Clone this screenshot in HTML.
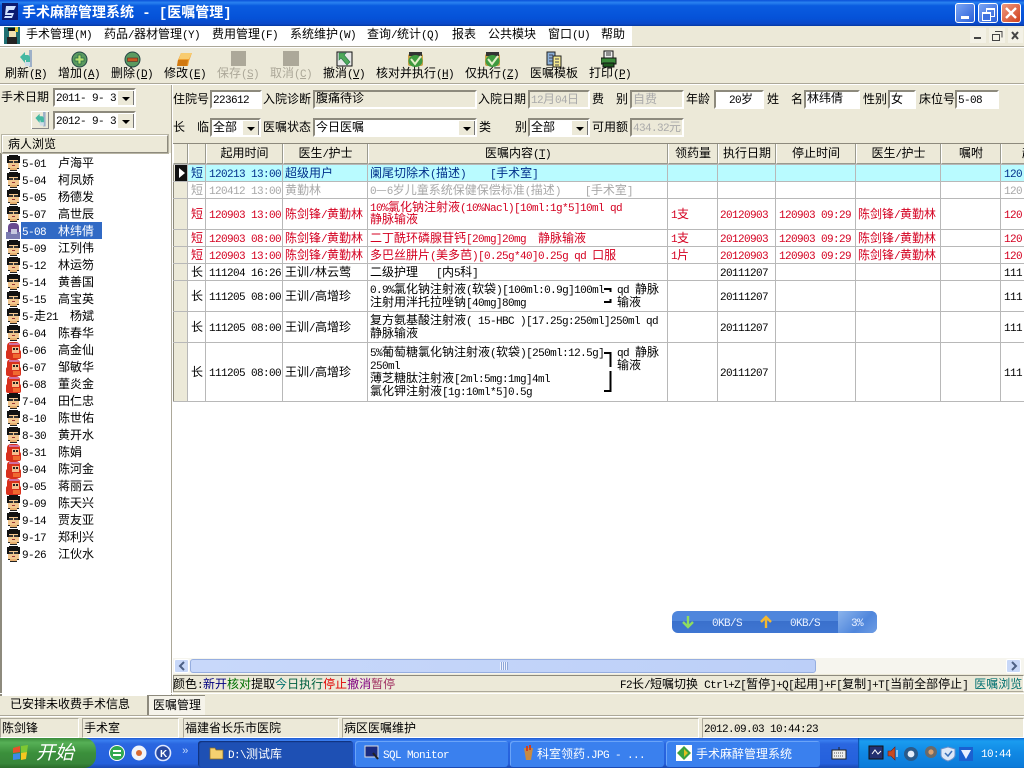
<!DOCTYPE html>
<html><head><meta charset="utf-8"><title>手术麻醉管理系统</title>
<style>
html,body{margin:0;padding:0;width:1024px;height:768px;overflow:hidden;background:#ece9d8}
body{position:relative;font:12px/13px "WenQuanYi Zen Hei","Noto Sans CJK SC",sans-serif;color:#000}
div,svg{position:absolute}
.t{white-space:pre;height:13px;line-height:13px;margin-top:-1px}
i{font-style:normal;font-family:"Liberation Mono",monospace;font-size:11px;letter-spacing:-.6px}
.in{box-sizing:border-box;background:#fff;border:2px solid;border-color:#8d8a7d #fff #fff #8d8a7d;white-space:pre;line-height:14px;padding-left:1px;overflow:hidden}
.g{background:#ece9d8;color:#aaa}
.dd{right:0;top:0;width:16px;height:15px;background:#ece9d8;border-left:1px solid #fff;border-top:1px solid #fff;box-shadow:inset -1px -1px 0 #777}
.dd:after{content:"";position:absolute;left:4px;top:6px;border:4px solid transparent;border-top:4px solid #000;border-bottom:0}
.h{top:144px;height:20px;background:#ece9d8;border-left:1px solid #fff;border-right:1px solid #9a9a8e;box-sizing:border-box;text-align:center;line-height:18px;white-space:pre;border-bottom:1px solid #9a9a8e}
.v{top:165px;width:1px;height:237px;background:#b8b8b8}
.l{left:173px;width:851px;height:1px;background:#b8b8b8}
.r,.r div{color:#d40020}
.b{color:#00308b}.y{color:#a8a8a8}
.tb{top:73px;height:13px;line-height:13px;margin-top:-7px;white-space:pre}
.p{top:718px;height:20px;box-sizing:border-box;border:1px solid;border-color:#aca899 #fff #fff #aca899;line-height:18px;white-space:pre;padding-left:1px}
.btn{top:741px;height:26px;border-radius:3px;color:#fff;line-height:25px;white-space:pre;box-sizing:border-box}
.wb{top:3px;width:20px;height:20px;border-radius:3px;border:1px solid #fff;box-sizing:border-box}
.lst{left:22px;white-space:pre;height:13px;line-height:13px;margin-top:-1px}
</style></head><body>
<svg width="0" height="0" style="left:0;top:0">
<defs>
<g id="man"><rect x="2" y="3" width="11" height="10" fill="#f2c78f"/><rect x="4" y="13" width="7" height="3" fill="#e8b070"/><rect x="3" y="0" width="9" height="2" fill="#111"/><rect x="1" y="1" width="13" height="4" fill="#111"/><rect x="1" y="5" width="2" height="3" fill="#111"/><rect x="12" y="5" width="2" height="3" fill="#111"/><rect x="3" y="6" width="4" height="2" fill="#333"/><rect x="8" y="6" width="4" height="2" fill="#333"/><rect x="6" y="10" width="3" height="1" fill="#933"/><rect x="2" y="13" width="2" height="1" fill="#222"/><rect x="11" y="13" width="2" height="1" fill="#222"/><rect x="4" y="15" width="7" height="1" fill="#222"/></g>
<g id="wom"><rect x="1" y="0" width="13" height="17" rx="4" fill="#d8301c"/><rect x="3" y="1" width="10" height="2" fill="#d070a0"/><rect x="0" y="8" width="15" height="9" rx="2" fill="#d8301c"/><rect x="6" y="5" width="7" height="6" fill="#f6bc8c"/><rect x="7" y="6" width="2" height="2" fill="#222"/><rect x="10" y="6" width="2" height="2" fill="#222"/><rect x="7" y="12" width="7" height="4" fill="#f06a30"/></g>
<g id="chk"><rect x="1" y="2" width="15" height="12" rx="2" fill="#c9a24a"/><rect x="2" y="0" width="13" height="4" fill="#333"/><ellipse cx="8.5" cy="9" rx="7" ry="6" fill="#3f9a3f"/><path d="M4 7l4 5 6-8" fill="none" stroke="#e4f0c8" stroke-width="2"/></g>
<g id="rf"><rect x="13" y="0" width="3" height="17" fill="#9db0c8"/><path d="M4 7l5-5v3h3a3 3 0 0 1 2 3v7h-4v-5h-1v3z" fill="#45b8a2"/><rect x="9" y="12" width="5" height="4" fill="#cfdde8"/></g>
</defs></svg>

<!-- title bar -->
<div style="left:0;top:0;width:1024px;height:26px;background:linear-gradient(#0a50d8 0,#2a82f0 10%,#0a5ce0 22%,#0552d8 70%,#0a48c8 92%,#0538a0 100%)"></div>
<div style="left:2px;top:3px;width:16px;height:17px;background:#0b1a70"></div>
<svg style="left:2px;top:3px" width="16" height="17"><path d="M4 3h10l-2 4H7l-2 3h7l-2 5H2l1-2h6l1-1H3z" fill="#cfe0ff"/></svg>
<div style="left:22px;top:4px;color:#fff;font-weight:bold;font-size:14px;line-height:16px;white-space:pre">手术麻醉管理系统<i style="font-weight:bold;font-size:14px;letter-spacing:-.1px"> - [</i>医嘱管理<i style="font-weight:bold;font-size:14px">]</i></div>
<div class="wb" style="left:955px;background:linear-gradient(135deg,#7ba6f4,#2a5fd8)"><div style="left:5px;top:12px;width:8px;height:3px;background:#fff"></div></div>
<div class="wb" style="left:978px;background:linear-gradient(135deg,#7ba6f4,#2a5fd8)"><div style="left:7px;top:4px;width:7px;height:6px;border:1px solid #fff;border-top-width:2px"></div><div style="left:3px;top:8px;width:7px;height:6px;border:1px solid #fff;border-top-width:2px;background:#3f72e0"></div></div>
<div class="wb" style="left:1001px;background:linear-gradient(135deg,#ee9a80,#d0401c)"><svg width="18" height="18" style="left:0;top:0"><path d="M4 4l10 10M14 4L4 14" stroke="#fff" stroke-width="2.4"/></svg></div>

<!-- menu bar -->
<div style="left:0;top:26px;width:632px;height:20px;background:#fff"></div>
<div style="left:0;top:46px;width:1024px;height:1px;background:#aca899"></div>
<div style="left:0;top:47px;width:1024px;height:1px;background:#fff"></div>
<div style="left:4px;top:27px;width:16px;height:17px;background:#1f6f72"></div>
<svg style="left:4px;top:27px" width="16" height="17"><rect x="5" y="2" width="7" height="8" fill="#f0e0b0"/><rect x="4" y="1" width="8" height="3" fill="#111"/><rect x="3" y="10" width="10" height="7" fill="#222"/><rect x="11" y="0" width="3" height="5" fill="#e6d040"/></svg>
<div class="t" style="left:26px;top:28px">手术管理<i>(M)</i></div>
<div class="t" style="left:104px;top:28px">药品<i>/</i>器材管理<i>(Y)</i></div>
<div class="t" style="left:212px;top:28px">费用管理<i>(F)</i></div>
<div class="t" style="left:290px;top:28px">系统维护<i>(W)</i></div>
<div class="t" style="left:367px;top:28px">查询<i>/</i>统计<i>(Q)</i></div>
<div class="t" style="left:452px;top:28px">报表</div>
<div class="t" style="left:488px;top:28px">公共模块</div>
<div class="t" style="left:548px;top:28px">窗口<i>(U)</i></div>
<div class="t" style="left:601px;top:28px">帮助</div>
<svg style="left:970px;top:28px" width="54" height="16"><rect x="0" y="0" width="16" height="15" fill="#f3f1e6"/><rect x="19" y="0" width="16" height="15" fill="#f3f1e6"/><rect x="38" y="0" width="15" height="15" fill="#f3f1e6"/><rect x="4" y="9" width="7" height="2" fill="#444"/><path d="M25 3.5h7v6M22.5 6.5h7v6h-7z" fill="none" stroke="#444"/><path d="M42 4l6 7M48 4l-6 7" stroke="#444" stroke-width="2"/></svg>

<!-- toolbar -->
<svg style="left:16px;top:50px" width="18" height="18"><use href="#rf"/></svg>
<svg style="left:71px;top:51px" width="17" height="17"><circle cx="8.5" cy="8.5" r="7.5" fill="#5a9a60" stroke="#244"/><path d="M7 4h3v3h3v3h-3v3H7v-3H4V7h3z" fill="#b8e070" stroke="#264" stroke-width=".7"/></svg>
<svg style="left:124px;top:51px" width="17" height="17"><circle cx="8.5" cy="8.5" r="7.5" fill="#5a9a60" stroke="#244"/><rect x="3.5" y="7" width="10" height="3.4" fill="#c85a20" stroke="#622" stroke-width=".6"/></svg>
<svg style="left:176px;top:52px" width="17" height="15"><path d="M5 1h11l-3 8-1 5H1l1-6z" fill="#f0a030"/><path d="M5 1h11l-3 6H3z" fill="#f8cc70"/><path d="M1 14l1-6h10l-1 6z" fill="#d07810"/></svg>
<div style="left:231px;top:51px;width:15px;height:15px;background:#aca899"></div>
<div style="left:283px;top:51px;width:16px;height:15px;background:#aca899"></div>
<svg style="left:336px;top:51px" width="17" height="16"><rect x="1" y="1" width="15" height="14" fill="#e8e8e8" stroke="#111"/><path d="M3 2h7L8 4l6 7-3 3-6-7-2 2z" fill="#4fa85a" stroke="#274" stroke-width=".6"/></svg>
<svg style="left:407px;top:52px" width="17" height="15"><use href="#chk"/></svg>
<svg style="left:484px;top:52px" width="17" height="15"><use href="#chk"/></svg>
<svg style="left:546px;top:50px" width="16" height="18"><rect x="1" y="2" width="8" height="13" fill="#8bb0d8" stroke="#222"/><rect x="7" y="6" width="8" height="11" fill="#f4ea90" stroke="#222"/><path d="M3 5h4M3 8h4M3 11h4M9 9h4M9 12h4M9 15h4" stroke="#445" /></svg>
<svg style="left:601px;top:50px" width="16" height="18"><rect x="3" y="1" width="9" height="7" fill="#eee" stroke="#111"/><path d="M5 3h5M5 5h5" stroke="#333"/><rect x="0" y="8" width="15" height="6" fill="#3a8a3a" stroke="#111"/><rect x="2" y="13" width="11" height="4" fill="#1e5a1e" stroke="#111"/></svg>
<div class="tb" style="left:5px">刷新<i>(<u>R</u>)</i></div>
<div class="tb" style="left:58px">增加<i>(<u>A</u>)</i></div>
<div class="tb" style="left:111px">删除<i>(<u>D</u>)</i></div>
<div class="tb" style="left:164px">修改<i>(<u>E</u>)</i></div>
<div class="tb" style="left:217px;color:#aca899">保存<i>(<u>S</u>)</i></div>
<div class="tb" style="left:270px;color:#aca899">取消<i>(<u>C</u>)</i></div>
<div class="tb" style="left:323px">撤消<i>(<u>V</u>)</i></div>
<div class="tb" style="left:376px">核对并执行<i>(<u>H</u>)</i></div>
<div class="tb" style="left:465px">仅执行<i>(<u>Z</u>)</i></div>
<div class="tb" style="left:530px">医嘱模板</div>
<div class="tb" style="left:589px">打印<i>(<u>P</u>)</i></div>
<div style="left:0;top:83px;width:1024px;height:1px;background:#aca899"></div>
<div style="left:0;top:84px;width:1024px;height:1px;background:#fff"></div>

<!-- left filter -->
<div class="t" style="left:1px;top:91px">手术日期</div>
<div class="in" style="left:53px;top:88px;width:83px;height:19px"><i>2011- 9- 3</i><div class="dd"></div></div>
<div style="left:31px;top:111px;width:18px;height:18px;background:#ece9d8;box-shadow:inset 1px 1px 0 #fff,inset -1px -1px 0 #888"></div>
<svg style="left:32px;top:112px" width="16" height="16"><g transform="scale(.85)"><use href="#rf"/></g></svg>
<div class="in" style="left:53px;top:111px;width:83px;height:19px"><i>2012- 9- 3</i><div class="dd"></div></div>

<!-- patient list -->
<div style="left:0;top:153px;width:171px;height:543px;background:#fff;border-left:2px solid #8d8a7d;box-sizing:border-box"></div>
<div style="left:2px;top:135px;width:166px;height:18px;box-sizing:border-box;border:1px solid;border-color:#fff #8d8a7d #8d8a7d #fff;line-height:16px;padding-left:5px;background:#ece9d8;outline:1px solid #b8b5a4">病人浏览</div>
<div style="left:21px;top:222px;width:81px;height:17px;background:#316ac5"></div>
<svg style="left:6px;top:155px" width="16" height="408">
<use href="#man" y="0"/><use href="#man" y="17"/><use href="#man" y="34"/><use href="#man" y="51"/>
<g transform="translate(0,68)"><rect x="2" y="0" width="11" height="16" rx="4" fill="#6a4a90"/><rect x="0" y="9" width="14" height="7" fill="#7a7ab0"/><rect x="5" y="6" width="6" height="5" fill="#c8c8e0"/></g>
<use href="#man" y="85"/><use href="#man" y="102"/><use href="#man" y="119"/><use href="#man" y="136"/><use href="#man" y="153"/><use href="#man" y="170"/>
<use href="#wom" y="187"/><use href="#wom" y="204"/><use href="#wom" y="221"/>
<use href="#man" y="238"/><use href="#man" y="255"/><use href="#man" y="272"/>
<use href="#wom" y="289"/><use href="#wom" y="306"/><use href="#wom" y="323"/>
<use href="#man" y="340"/><use href="#man" y="357"/><use href="#man" y="374"/><use href="#man" y="391"/>
</svg>
<div class="lst" style="top:157px"><i>5-01  </i>卢海平</div>
<div class="lst" style="top:174px"><i>5-04  </i>柯凤娇</div>
<div class="lst" style="top:191px"><i>5-05  </i>杨德发</div>
<div class="lst" style="top:208px"><i>5-07  </i>高世辰</div>
<div class="lst" style="top:225px;color:#fff"><i>5-08  </i>林纬倩</div>
<div class="lst" style="top:242px"><i>5-09  </i>江列伟</div>
<div class="lst" style="top:259px"><i>5-12  </i>林运笏</div>
<div class="lst" style="top:276px"><i>5-14  </i>黄善国</div>
<div class="lst" style="top:293px"><i>5-15  </i>高宝英</div>
<div class="lst" style="top:310px"><i>5-</i>走<i>21  </i>杨斌</div>
<div class="lst" style="top:327px"><i>6-04  </i>陈春华</div>
<div class="lst" style="top:344px"><i>6-06  </i>高金仙</div>
<div class="lst" style="top:361px"><i>6-07  </i>邹敏华</div>
<div class="lst" style="top:378px"><i>6-08  </i>董炎金</div>
<div class="lst" style="top:395px"><i>7-04  </i>田仁忠</div>
<div class="lst" style="top:412px"><i>8-10  </i>陈世佑</div>
<div class="lst" style="top:429px"><i>8-30  </i>黄开水</div>
<div class="lst" style="top:446px"><i>8-31  </i>陈娟</div>
<div class="lst" style="top:463px"><i>9-04  </i>陈河金</div>
<div class="lst" style="top:480px"><i>9-05  </i>蒋丽云</div>
<div class="lst" style="top:497px"><i>9-09  </i>陈天兴</div>
<div class="lst" style="top:514px"><i>9-14  </i>贾友亚</div>
<div class="lst" style="top:531px"><i>9-17  </i>郑利兴</div>
<div class="lst" style="top:548px"><i>9-26  </i>江伙水</div>

<!-- form -->
<div style="left:171px;top:85px;width:1px;height:610px;background:#aca899"></div>
<div style="left:172px;top:85px;width:1px;height:610px;background:#fff"></div>
<div class="t" style="left:173px;top:93px">住院号</div>
<div class="in" style="left:210px;top:90px;width:52px;height:19px"><i>223612</i></div>
<div class="t" style="left:263px;top:93px">入院诊断</div>
<div class="in" style="left:313px;top:90px;width:164px;height:19px;background:#ece9d8;line-height:12px">腹痛待诊</div>
<div class="t" style="left:478px;top:93px">入院日期</div>
<div class="in g" style="left:528px;top:90px;width:62px;height:19px"><i>12</i>月<i>04</i>日</div>
<div class="t" style="left:592px;top:93px">费</div><div class="t" style="left:616px;top:93px">别</div>
<div class="in g" style="left:630px;top:90px;width:54px;height:19px">自费</div>
<div class="t" style="left:686px;top:93px">年龄</div>
<div class="in" style="left:714px;top:90px;width:50px;height:19px"><i>  20</i>岁</div>
<div class="t" style="left:767px;top:93px">姓</div><div class="t" style="left:791px;top:93px">名</div>
<div class="in" style="left:804px;top:90px;width:56px;height:19px;line-height:12px">林纬倩</div>
<div class="t" style="left:863px;top:93px">性别</div>
<div class="in" style="left:888px;top:90px;width:28px;height:19px">女</div>
<div class="t" style="left:919px;top:93px">床位号</div>
<div class="in" style="left:955px;top:90px;width:44px;height:19px"><i>5-08</i></div>

<div class="t" style="left:173px;top:121px">长</div><div class="t" style="left:197px;top:121px">临</div>
<div class="in" style="left:210px;top:118px;width:51px;height:19px">全部<div class="dd"></div></div>
<div class="t" style="left:263px;top:121px">医嘱状态</div>
<div class="in" style="left:313px;top:118px;width:164px;height:19px">今日医嘱<div class="dd"></div></div>
<div class="t" style="left:479px;top:121px">类</div><div class="t" style="left:515px;top:121px">别</div>
<div class="in" style="left:528px;top:118px;width:62px;height:19px">全部<div class="dd"></div></div>
<div class="t" style="left:592px;top:121px">可用额</div>
<div class="in g" style="left:630px;top:118px;width:54px;height:19px"><i>434.32</i>元</div>

<!-- grid -->
<div style="left:173px;top:144px;width:851px;height:514px;background:#fff"></div>
<div style="left:173px;top:143px;width:851px;height:1px;background:#8d8a7d"></div>
<div style="left:173px;top:165px;width:15px;height:237px;background:#ece9d8"></div>
<div style="left:188px;top:165px;width:836px;height:16px;background:#b9fbff"></div>
<div class="h" style="left:173px;width:15px"></div>
<div class="h" style="left:188px;width:18px"></div>
<div class="h" style="left:206px;width:77px">起用时间</div>
<div class="h" style="left:283px;width:85px">医生<i>/</i>护士</div>
<div class="h" style="left:368px;width:300px">医嘱内容<i>(<u>T</u>)</i></div>
<div class="h" style="left:668px;width:50px">领药量</div>
<div class="h" style="left:718px;width:58px">执行日期</div>
<div class="h" style="left:776px;width:80px">停止时间</div>
<div class="h" style="left:856px;width:85px">医生<i>/</i>护士</div>
<div class="h" style="left:941px;width:60px">嘱咐</div>
<div class="h" style="left:1001px;width:23px;border-right:0;text-align:left;padding-left:20px;overflow:hidden">起</div>

<div class="v" style="left:173px;background:#8d8a7d"></div><div class="v" style="left:187px"></div><div class="v" style="left:205px"></div><div class="v" style="left:282px"></div><div class="v" style="left:367px"></div><div class="v" style="left:667px"></div><div class="v" style="left:717px"></div><div class="v" style="left:775px"></div><div class="v" style="left:855px"></div><div class="v" style="left:940px"></div><div class="v" style="left:1000px"></div>
<div class="l" style="top:164px"></div><div class="l" style="top:181px"></div><div class="l" style="top:198px"></div><div class="l" style="top:229px"></div><div class="l" style="top:246px"></div><div class="l" style="top:263px"></div><div class="l" style="top:280px"></div><div class="l" style="top:311px"></div><div class="l" style="top:342px"></div><div class="l" style="top:401px"></div>
<div style="left:175px;top:165px;width:12px;height:16px;background:#111"></div>
<svg style="left:175px;top:165px" width="12" height="16"><path d="M4 3l6 5-6 5z" fill="#fff"/></svg>

<div class="t b" style="left:191px;top:167px">短</div><div class="t b" style="left:209px;top:167px"><i>120213 13:00</i></div><div class="t b" style="left:285px;top:167px">超级用户</div><div class="t b" style="left:370px;top:167px">阑尾切除术<i>(</i>描述<i>)    [</i>手术室<i>]</i></div><div class="t b" style="left:1004px;top:167px"><i>120</i></div>

<div class="t y" style="left:191px;top:184px">短</div><div class="t y" style="left:209px;top:184px"><i>120412 13:00</i></div><div class="t y" style="left:285px;top:184px">黄勤林</div><div class="t y" style="left:370px;top:184px"><i>0</i>—<i>6</i>岁儿童系统保健保偿标准<i>(</i>描述<i>)    [</i>手术室<i>]</i></div><div class="t y" style="left:1004px;top:184px"><i>120</i></div>

<div class="r">
<div class="t" style="left:191px;top:208px">短</div><div class="t" style="left:209px;top:208px"><i>120903 13:00</i></div><div class="t" style="left:285px;top:208px">陈剑锋<i>/</i>黄勤林</div><div class="t" style="left:370px;top:201px"><i>10%</i>氯化钠注射液<i>(10%Nacl)[10ml:1g*5]10ml qd</i></div><div class="t" style="left:370px;top:213px">静脉输液</div><div class="t" style="left:671px;top:208px"><i>1</i>支</div><div class="t" style="left:720px;top:208px"><i>20120903</i></div><div class="t" style="left:779px;top:208px"><i>120903 09:29</i></div><div class="t" style="left:858px;top:208px">陈剑锋<i>/</i>黄勤林</div><div class="t" style="left:1004px;top:208px"><i>120</i></div>

<div class="t" style="left:191px;top:232px">短</div><div class="t" style="left:209px;top:232px"><i>120903 08:00</i></div><div class="t" style="left:285px;top:232px">陈剑锋<i>/</i>黄勤林</div><div class="t" style="left:370px;top:232px">二丁酰环磷腺苷钙<i>[20mg]20mg  </i>静脉输液</div><div class="t" style="left:671px;top:232px"><i>1</i>支</div><div class="t" style="left:720px;top:232px"><i>20120903</i></div><div class="t" style="left:779px;top:232px"><i>120903 09:29</i></div><div class="t" style="left:858px;top:232px">陈剑锋<i>/</i>黄勤林</div><div class="t" style="left:1004px;top:232px"><i>120</i></div>

<div class="t" style="left:191px;top:249px">短</div><div class="t" style="left:209px;top:249px"><i>120903 13:00</i></div><div class="t" style="left:285px;top:249px">陈剑锋<i>/</i>黄勤林</div><div class="t" style="left:370px;top:249px">多巴丝肼片<i>(</i>美多芭<i>)[0.25g*40]0.25g qd </i>口服</div><div class="t" style="left:671px;top:249px"><i>1</i>片</div><div class="t" style="left:720px;top:249px"><i>20120903</i></div><div class="t" style="left:779px;top:249px"><i>120903 09:29</i></div><div class="t" style="left:858px;top:249px">陈剑锋<i>/</i>黄勤林</div><div class="t" style="left:1004px;top:249px"><i>120</i></div>
</div>

<div class="t" style="left:191px;top:266px">长</div><div class="t" style="left:209px;top:266px"><i>111204 16:26</i></div><div class="t" style="left:285px;top:266px">王训<i>/</i>林云莺</div><div class="t" style="left:370px;top:266px">二级护理<i>   [</i>内<i>5</i>科<i>]</i></div><div class="t" style="left:720px;top:266px"><i>20111207</i></div><div class="t" style="left:1004px;top:266px"><i>111</i></div>

<div class="t" style="left:191px;top:290px">长</div><div class="t" style="left:209px;top:290px"><i>111205 08:00</i></div><div class="t" style="left:285px;top:290px">王训<i>/</i>高增珍</div><div class="t" style="left:370px;top:283px"><i>0.9%</i>氯化钠注射液<i>(</i>软袋<i>)[100ml:0.9g]100ml</i></div><div class="t" style="left:370px;top:296px">注射用泮托拉唑钠<i>[40mg]80mg</i></div><div class="t" style="left:617px;top:283px"><i>qd </i>静脉</div><div class="t" style="left:617px;top:296px">输液</div><div class="t" style="left:720px;top:290px"><i>20111207</i></div><div class="t" style="left:1004px;top:290px"><i>111</i></div>
<svg style="left:604px;top:287px" width="9" height="17"><path d="M0 2h6.5v3M6.5 12v3H0" fill="none" stroke="#000" stroke-width="2"/></svg>

<div class="t" style="left:191px;top:321px">长</div><div class="t" style="left:209px;top:321px"><i>111205 08:00</i></div><div class="t" style="left:285px;top:321px">王训<i>/</i>高增珍</div><div class="t" style="left:370px;top:314px">复方氨基酸注射液<i>( 15-HBC )[17.25g:250ml]250ml qd</i></div><div class="t" style="left:370px;top:327px">静脉输液</div><div class="t" style="left:720px;top:321px"><i>20111207</i></div><div class="t" style="left:1004px;top:321px"><i>111</i></div>

<div class="t" style="left:191px;top:366px">长</div><div class="t" style="left:209px;top:366px"><i>111205 08:00</i></div><div class="t" style="left:285px;top:366px">王训<i>/</i>高增珍</div><div class="t" style="left:370px;top:346px"><i>5%</i>葡萄糖氯化钠注射液<i>(</i>软袋<i>)[250ml:12.5g]</i></div><div class="t" style="left:370px;top:359px"><i>250ml</i></div><div class="t" style="left:370px;top:372px">薄芝糖肽注射液<i>[2ml:5mg:1mg]4ml</i></div><div class="t" style="left:370px;top:385px">氯化钾注射液<i>[1g:10ml*5]0.5g</i></div><div class="t" style="left:617px;top:346px"><i>qd </i>静脉</div><div class="t" style="left:617px;top:359px">输液</div><div class="t" style="left:720px;top:366px"><i>20111207</i></div><div class="t" style="left:1004px;top:366px"><i>111</i></div>
<svg style="left:604px;top:351px" width="9" height="42"><path d="M0 2h6.5v14M6.5 20v20H0" fill="none" stroke="#000" stroke-width="2"/></svg>

<!-- net widget -->
<div style="left:672px;top:611px;width:205px;height:22px;border-radius:6px;background:linear-gradient(#4f86dc 0,#4f86dc 45%,#3a70cc 46%,#3f76d2 100%);overflow:hidden"><div style="left:166px;top:0;width:39px;height:22px;background:linear-gradient(135deg,#8cb4ec,#4f86dc 60%,#6f9ee4)"></div></div>
<svg style="left:680px;top:614px" width="100" height="16"><path d="M8 2v10M3 8l5 5 5-5" fill="none" stroke="#8edc60" stroke-width="2.4"/><path d="M86 14V4M81 8l5-5 5 5" fill="none" stroke="#f4b830" stroke-width="2.4"/></svg>
<div class="t" style="left:712px;top:616px;color:#e8f0ff"><i>0KB/S</i></div>
<div class="t" style="left:790px;top:616px;color:#e8f0ff"><i>0KB/S</i></div>
<div class="t" style="left:851px;top:616px;color:#e8f0ff"><i>3%</i></div>

<!-- scrollbar -->
<div style="left:173px;top:658px;width:851px;height:16px;background:#f6f5ee"></div>
<div style="left:174px;top:659px;width:15px;height:14px;background:#c8d8f8;border:1px solid #fff;border-radius:2px;box-sizing:border-box"></div>
<svg style="left:177px;top:660px" width="10" height="12"><path d="M7 2L3 6l4 4" fill="none" stroke="#4d6185" stroke-width="2"/></svg>
<div style="left:190px;top:659px;width:626px;height:14px;background:linear-gradient(90deg,#c8d8fa,#bccff8);border:1px solid #96aee0;border-radius:3px;box-sizing:border-box"></div>
<div style="left:500px;top:662px;width:8px;height:8px;background:repeating-linear-gradient(90deg,#eef3ff 0 1px,#8fa8d8 1px 2px)"></div>
<div style="left:1006px;top:659px;width:15px;height:14px;background:#c8d8f8;border:1px solid #fff;border-radius:2px;box-sizing:border-box"></div>
<svg style="left:1009px;top:660px" width="10" height="12"><path d="M3 2l4 4-4 4" fill="none" stroke="#4d6185" stroke-width="2"/></svg>
<div style="left:173px;top:675px;width:851px;height:17px;box-sizing:border-box;border:1px solid;border-color:#8d8a7d #fff #aca899 #8d8a7d"></div>
<div class="t" style="left:173px;top:678px">颜色<i>:</i><span style="color:#000080">新开</span><span style="color:#007000">核对</span>提取<span style="color:#007070">今</span><span style="color:#006040">日执行</span><span style="color:#e00000">停止</span><span style="color:#800080">撤消</span><span style="color:#a03060">暂停</span></div>
<div class="t" style="left:620px;top:678px"><i>F2</i>长<i>/</i>短嘱切换<i> Ctrl+Z[</i>暂停<i>]+Q[</i>起用<i>]+F[</i>复制<i>]+T[</i>当前全部停止<i>] </i><span style="color:#007070">医嘱浏览</span></div>

<!-- tabs -->
<div style="left:0;top:693px;width:1024px;height:1px;background:#fff"></div>
<div class="t" style="left:10px;top:698px">已安排未收费手术信息</div>
<div style="left:147px;top:695px;width:58px;height:20px;background:#f5f3ea;border-left:2px solid #8d8a7d;border-top:1px solid #8d8a7d;box-sizing:border-box;line-height:18px;padding-left:4px">医嘱管理</div>
<div style="left:0;top:715px;width:1024px;height:1px;background:#aca899"></div>
<div style="left:0;top:716px;width:1024px;height:1px;background:#fff"></div>

<!-- status -->
<div class="p" style="left:0;width:79px">陈剑锋</div>
<div class="p" style="left:82px;width:97px">手术室</div>
<div class="p" style="left:183px;width:156px">福建省长乐市医院</div>
<div class="p" style="left:342px;width:357px">病区医嘱维护</div>
<div class="p" style="left:702px;width:322px"><i>2012.09.03 10:44:23</i></div>

<!-- taskbar -->
<div style="left:0;top:738px;width:1024px;height:30px;background:linear-gradient(#1f5ad0 0,#3a7ef0 8%,#2a66e0 20%,#2460dc 85%,#1a48b0 100%)"></div>
<div style="left:0;top:738px;width:96px;height:30px;border-radius:0 12px 12px 0;background:linear-gradient(#3c8c3c 0,#56b056 15%,#3b8f3b 50%,#38863a 85%,#2a6c2a 100%)"></div>
<svg style="left:11px;top:744px" width="20" height="18"><path d="M2 4l7-2v6l-7 1z" fill="#e8502a"/><path d="M10 2l7-1-1 7-6 1z" fill="#7ec832"/><path d="M2 10l7-1v6l-7 1z" fill="#3c8ae8"/><path d="M10 9l6-1-1 7-5 1z" fill="#f4c820"/></svg>
<div class="t" style="left:36px;top:743px;color:#fff;font-size:19px;line-height:20px;height:20px;font-style:italic">开始</div>
<svg style="left:108px;top:744px" width="66" height="18"><circle cx="9" cy="9" r="7.5" fill="#30a850" stroke="#fff"/><path d="M5 7h8M5 11h8" stroke="#fff" stroke-width="2"/><circle cx="31" cy="9" r="7.5" fill="#f0f4fa"/><circle cx="31" cy="9" r="3" fill="#d86a30"/><circle cx="55" cy="9" r="7.5" fill="#2848a0" stroke="#dfe8ff" stroke-width="1.6"/><text x="52" y="13" font-size="10" font-family="Liberation Sans" font-weight="bold" fill="#fff">K</text></svg>
<div class="t" style="left:182px;top:744px;color:#bcd4fa"><i>»</i></div>
<div class="btn" style="left:198px;width:155px;background:#1e50b4;padding-left:30px;box-shadow:inset 1px 1px 1px #10307a"><i>D:\</i>测试库</div>
<svg style="left:209px;top:745px" width="16" height="16"><path d="M1 3h5l1 2h7v9H1z" fill="#f4d070" stroke="#8a6a20" stroke-width=".7"/></svg>
<div class="btn" style="left:355px;width:153px;background:#3a80ee;padding-left:28px;box-shadow:inset 1px 1px 0 #6aa4f8"><i>SQL Monitor</i></div>
<svg style="left:364px;top:745px" width="16" height="16"><rect x="1" y="1" width="13" height="11" fill="#1a2a80" stroke="#ddd"/><path d="M9 8l5 6" stroke="#222" stroke-width="2"/></svg>
<div class="btn" style="left:510px;width:154px;background:#3a80ee;padding-left:27px;box-shadow:inset 1px 1px 0 #6aa4f8">科室领药<i>.JPG - ...</i></div>
<svg style="left:521px;top:745px" width="16" height="16"><path d="M3 3h9l-2 12H5z" fill="#c88a40"/><path d="M6 1v5M9 0v5" stroke="#d04020" stroke-width="2"/></svg>
<div class="btn" style="left:666px;width:154px;background:#3a80ee;padding-left:30px;box-shadow:inset 1px 1px 0 #6aa4f8">手术麻醉管理系统</div>
<svg style="left:676px;top:745px" width="16" height="16"><rect width="16" height="16" fill="#fff"/><path d="M8 1l7 7-7 7-7-7z" fill="#3aa040"/><path d="M8 4l4 4-4 4z" fill="#e0c020"/></svg>
<svg style="left:831px;top:746px" width="16" height="14"><rect x="1" y="4" width="14" height="9" fill="#eee" stroke="#222"/><path d="M3 7h10M3 10h10" stroke="#555" stroke-dasharray="1 1"/><path d="M8 4V1" stroke="#222"/></svg>
<div style="left:858px;top:738px;width:166px;height:30px;background:linear-gradient(#0c70d8 0,#1a9cf0 10%,#1088e4 50%,#0c7ad8 100%);box-shadow:inset 1px 0 1px #0a4ca8"></div>
<svg style="left:868px;top:745px" width="112" height="17"><rect x="1" y="1" width="14" height="13" fill="#223070" stroke="#111"/><path d="M4 9l3-4 3 4 3-3" stroke="#fff" fill="none"/><path d="M20 6h3l4-4v13l-4-4h-3z" fill="#c84a20" stroke="#622" stroke-width=".6"/><path d="M29 5v7" stroke="#fff"/><circle cx="43" cy="9" r="7" fill="#2a5a8a"/><circle cx="43" cy="9" r="3.4" fill="#e4eefa"/><circle cx="63" cy="7" r="6" fill="#6a6a6a"/><circle cx="63" cy="7" r="2.6" fill="#d8a070"/><path d="M80 2l7 2v6c0 3-4 5-7 6-3-1-7-3-7-6V4z" fill="#dde8f8" stroke="#6a90c8"/><path d="M77 8l3 3 4-5" stroke="#3a70b8" fill="none" stroke-width="1.5"/><rect x="91" y="2" width="14" height="14" fill="#1a60d0"/><path d="M93 5h10l-5 9z" fill="#e8f0ff"/></svg>
<div class="t" style="left:981px;top:747px;color:#fff"><i>10:44</i></div>
</body></html>
